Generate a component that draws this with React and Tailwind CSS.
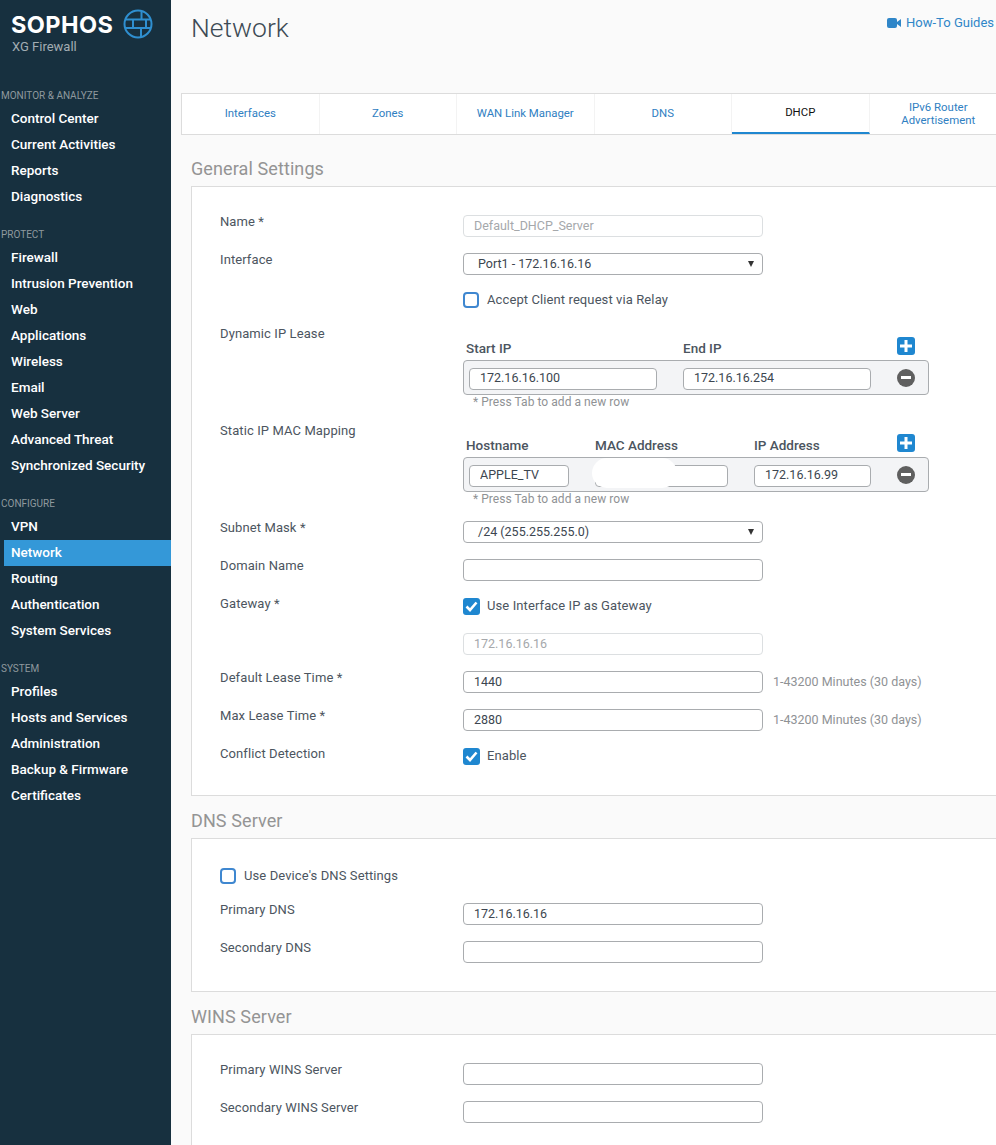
const menu = [
  { title: 'MONITOR & ANALYZE', items: ['Control Center', 'Current Activities', 'Reports', 'Diagnostics'] },
  { title: 'PROTECT', items: ['Firewall', 'Intrusion Prevention', 'Web', 'Applications', 'Wireless', 'Email', 'Web Server', 'Advanced Threat', 'Synchronized Security'] },
  { title: 'CONFIGURE', items: ['VPN', 'Network', 'Routing', 'Authentication', 'System Services'] },
  { title: 'SYSTEM', items: ['Profiles', 'Hosts and Services', 'Administration', 'Backup & Firmware', 'Certificates'] },
];

const tabs = ['Interfaces', 'Zones', 'WAN Link Manager', 'DNS', 'DHCP'];

function Logo() {
  return (
    <svg width="30" height="30" viewBox="0 0 30 30" fill="none" stroke="#2f8fd0" strokeWidth="2">
      <circle cx="15" cy="15" r="13.5" />
      <path d="M2.500 10.500h25M2.500 19h25M18.500 2v8.500M10 10.500V19M23 10.500V19M18 19v9" />
    </svg>
  );
}

function Sidebar() {
  return (
    <aside className="w-[171px] shrink-0 bg-[#17303f] h-full">
      <div className="h-[86px] pl-[11px] pt-[9px]">
        <div className="flex items-start">
          <span className="text-[23.5px] leading-[30px] mt-px font-bold text-white tracking-[0.4px] font-['Inter',sans-serif] w-[112px]">SOPHOS</span>
          <Logo />
        </div>
        <div className="text-[13px] leading-4 text-[#a3adb3] pl-px -mt-px">XG Firewall</div>
      </div>
      {menu.map((s) => (
        <div key={s.title} className="mb-[15px]">
          <div className="h-5 leading-5 text-[10px] text-[#8f999e] pl-[1px]">{s.title}</div>
          {s.items.map((it) => (
            <div
              key={it}
              className={`h-[26px] leading-[24px] pl-[7px] ml-1 text-[13.5px] font-medium text-white ${it === 'Network' ? 'bg-[#3498d8]' : ''}`}
            >
              {it}
            </div>
          ))}
        </div>
      ))}
    </aside>
  );
}

function Field({ value = '', disabled, className = 'w-[300px]' }) {
  return (
    <input
      readOnly
      value={value}
      className={`${className} h-[22px] rounded-[4px] border px-[10px] pb-[2px] text-[12.5px] bg-white outline-none ${disabled ? 'border-[#dcdfe1] text-[#a5a8ab]' : 'border-[#a9acaf] text-[#3c4650]'}`}
    />
  );
}

function Select({ value }) {
  return (
    <div className="w-[300px] h-[22px] rounded-[4px] border border-[#a9acaf] bg-white pl-[14px] pr-2 flex items-center justify-between text-[12.5px] text-[#3c4650]">
      <span>{value}</span>
      <span className="w-0 h-0 border-x-[3.5px] border-x-transparent border-t-[6px] border-t-[#333]" />
    </div>
  );
}

function Check({ checked, label }) {
  return (
    <div className="flex items-center text-[13px] tracking-[0.1px] text-[#4c5560]">
      {checked ? (
        <span className="w-[17px] h-[17px] mr-[7px] rounded-[3px] bg-[#1f87d0] flex items-center justify-center">
          <svg width="13" height="11" viewBox="0 0 13 11" fill="none" stroke="white" strokeWidth="2.600">
            <path d="M1.500 5.500l3.500 3.500 6.500-7.500" />
          </svg>
        </span>
      ) : (
        <span className="w-[16px] h-[16px] mr-2 rounded-[4px] border-2 border-[#3f87d0] bg-white" />
      )}
      <span className="-mt-px">{label}</span>
    </div>
  );
}

function Row({ label, height, children, hint }) {
  return (
    <div className={`flex ${height}`}>
      <div className="w-[243px] shrink-0 text-[13px] tracking-[0.1px] leading-4 text-[#4c5560] -mt-[1px]">{label}</div>
      <div className="flex items-start">
        {children}
        {hint && <span className="ml-[10px] leading-[22px] text-[12.5px] text-[#8f9295]">{hint}</span>}
      </div>
    </div>
  );
}

function RoundBtn({ plus }) {
  if (plus) {
    return (
      <span className="w-[18px] h-[18px] rounded-[3px] bg-[#1f87d0] flex items-center justify-center">
        <svg width="12" height="12" viewBox="0 0 12 12" stroke="white" strokeWidth="3"><path d="M6 0v12M0 6h12" /></svg>
      </span>
    );
  }
  return (
    <span className="w-[18px] h-[18px] rounded-full bg-[#5f5f5f] flex items-center justify-center">
      <span className="w-[10px] h-[3px] bg-white" />
    </span>
  );
}

function GridTable({ cols }) {
  return (
    <div className="w-[466px] mt-[4px]">
      <div className="flex h-[29px] items-end">
        <div className="flex-1 flex text-[13.5px] leading-[18px] text-[#4c5560] font-medium pb-[3px] pl-[3px]">
          {cols.map((c) => (
            <div key={c.label} className={c.head}>{c.label}</div>
          ))}
        </div>
        <div className="mr-[14px] mb-[5px]"><RoundBtn plus /></div>
      </div>
      <div className="h-[35px] rounded-[4px] border border-[#a9acaf] bg-[#f3f4f6] flex items-center pl-[5px]">
        <div className="flex-1 flex gap-[26px]">
          {cols.map((c) => (
            <div key={c.label} className="relative">
              <Field value={c.value} className={c.width} />
              {c.blob && <span className="absolute -left-[3px] -top-[4px] w-[85px] h-[30px] rounded-full bg-white" />}
            </div>
          ))}
        </div>
        <div className="mr-[13px]"><RoundBtn /></div>
      </div>
      <div className="text-[12px] tracking-[0.05px] leading-4 text-[#8f9295] pl-[10px] -mt-[1px]">* Press Tab to add a new row</div>
    </div>
  );
}

const dynamicCols = [
  { label: 'Start IP', value: '172.16.16.100', head: 'w-[217px]', width: 'w-[188px]' },
  { label: 'End IP', value: '172.16.16.254', head: 'w-[200px]', width: 'w-[188px]' },
];

const staticCols = [
  { label: 'Hostname', value: 'APPLE_TV', head: 'w-[129px]', width: 'w-[100px]' },
  { label: 'MAC Address', value: '', head: 'w-[159px]', width: 'w-[133px]', blob: true },
  { label: 'IP Address', value: '172.16.16.99', head: 'w-[120px]', width: 'w-[117px]' },
];

const lease = '1-43200 Minutes (30 days)';

function Card({ title, titleTop, cardHeight, pad, children }) {
  return (
    <section>
      <h2 className={`${titleTop} text-[18px] tracking-[0.1px] leading-6 text-[#949494] ml-[20px]`}>{title}</h2>
      <div className={`${cardHeight} ${pad} ml-[20px] mt-[5px] -mr-10 bg-white border border-[#dcdcdc] pl-[28px]`}>
        {children}
      </div>
    </section>
  );
}

export default function App() {
  return (
    <div className="w-[996px] h-[1145px] overflow-hidden flex bg-[#fafafa] font-['Roboto',sans-serif]">
      <Sidebar />
      <main className="flex-1 min-w-0">
        <header className="h-[93px] flex justify-between pl-[20px] pr-[2px]">
          <h1 className="text-[26.5px] leading-8 font-light text-[#3d4a55] mt-[12px]">Network</h1>
          <div className="flex items-center h-4 mt-[15px] gap-[5px] text-[13px] text-[#2f86c8]">
            <svg width="14" height="10" viewBox="0 0 14 10" fill="#2f86c8">
              <rect width="10" height="10" rx="2" />
              <path d="M10 4l4-3v8l-4-3z" />
            </svg>
            How-To Guides
          </div>
        </header>
        <div className="ml-[10px] -mr-2 h-[42px] bg-white border border-[#dcdcdc] flex">
          {tabs.map((t) => (
            <div
              key={t}
              className={`w-[137.5px] shrink-0 flex items-center justify-center text-[11.4px] border-r border-[#f3f3f3] ${t === 'DHCP' ? 'border-b-2 border-b-[#1f87d0] text-[#111]' : 'text-[#2f80c2]'}`}
            >
              {t}
            </div>
          ))}
          <div className="w-[137.5px] shrink-0 flex items-center justify-center text-center text-[11.4px] leading-[13px] text-[#2f80c2]">
            IPv6 Router<br />Advertisement
          </div>
        </div>

        <Card title="General Settings" titleTop="mt-[22px]" cardHeight="h-[610px]" pad="pt-[28px]">
          <Row label="Name *" height="h-[38px]"><Field value="Default_DHCP_Server" disabled /></Row>
          <Row label="Interface" height="h-[37px]"><Select value="Port1 - 172.16.16.16" /></Row>
          <Row height="h-[37px]"><div className="mt-[1px]"><Check label="Accept Client request via Relay" /></div></Row>
          <Row label="Dynamic IP Lease" height="h-[97px]"><GridTable cols={dynamicCols} /></Row>
          <Row label="Static IP MAC Mapping" height="h-[97px]"><GridTable cols={staticCols} /></Row>
          <Row label="Subnet Mask *" height="h-[38px]"><Select value="/24 (255.255.255.0)" /></Row>
          <Row label="Domain Name" height="h-[38px]"><Field /></Row>
          <Row label="Gateway *" height="h-[36px]"><Check checked label="Use Interface IP as Gateway" /></Row>
          <Row height="h-[38px]"><Field value="172.16.16.16" disabled /></Row>
          <Row label="Default Lease Time *" height="h-[38px]" hint={lease}><Field value="1440" /></Row>
          <Row label="Max Lease Time *" height="h-[38px]" hint={lease}><Field value="2880" /></Row>
          <Row label="Conflict Detection"><Check checked label="Enable" /></Row>
        </Card>

        <Card title="DNS Server" titleTop="mt-[13px]" cardHeight="h-[154px]" pad="pt-[28px]">
          <div className="h-[36px]"><Check label="Use Device's DNS Settings" /></div>
          <Row label="Primary DNS" height="h-[38px]"><Field value="172.16.16.16" /></Row>
          <Row label="Secondary DNS"><Field /></Row>
        </Card>

        <Card title="WINS Server" titleTop="mt-[13px]" cardHeight="h-[140px]" pad="pt-[28px]">
          <Row label="Primary WINS Server" height="h-[38px]"><Field /></Row>
          <Row label="Secondary WINS Server"><Field /></Row>
        </Card>
      </main>
    </div>
  );
}
